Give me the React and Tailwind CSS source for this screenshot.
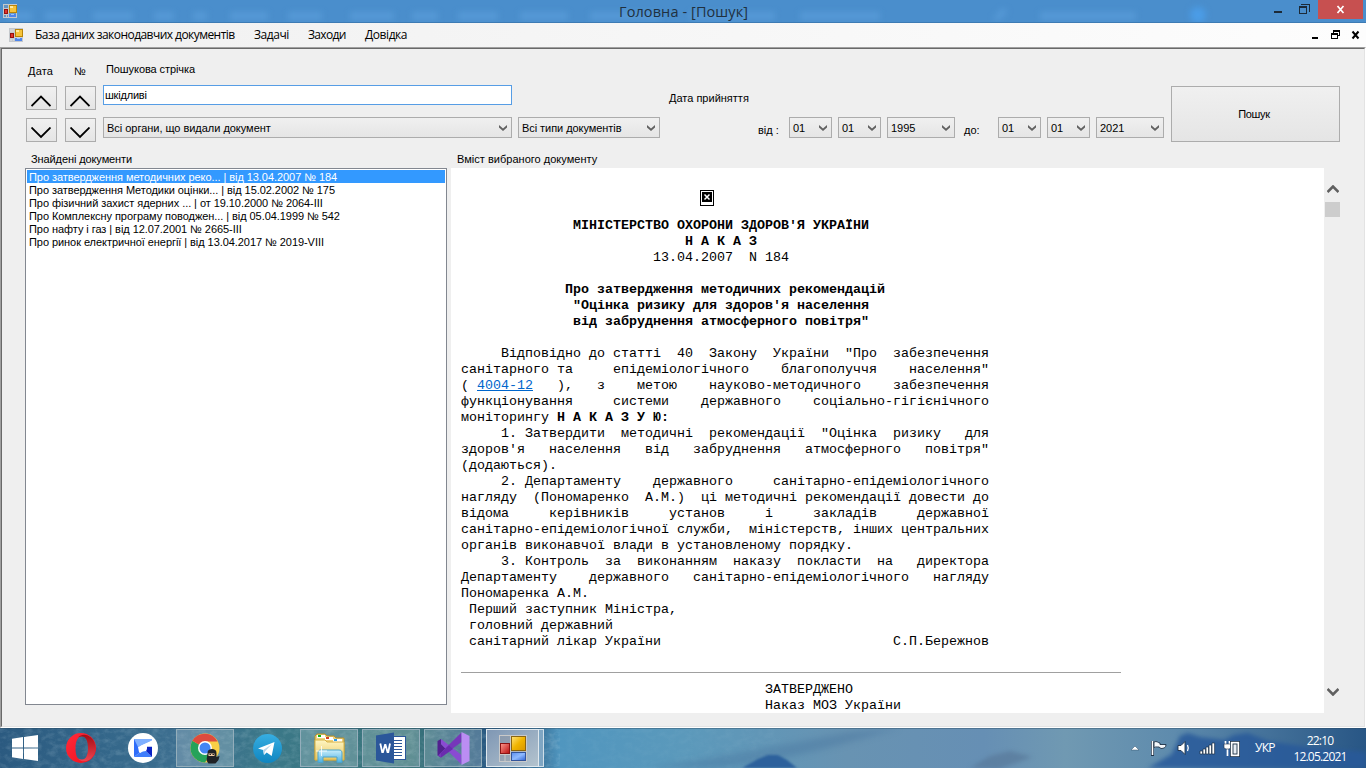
import React from "react";

const UI = "font-['Liberation_Sans',Arial,sans-serif] text-[11px] leading-[13px] whitespace-pre text-black";

function FormsIcon({ className }) {
  return (
    <svg className={className} viewBox="0 0 28 27" fill="none">
      <defs>
        <linearGradient id="fy" x1="0" y1="0" x2="1" y2="1">
          <stop offset="0" stopColor="#ffe27a" />
          <stop offset="0.5" stopColor="#f0b400" />
          <stop offset="1" stopColor="#d79500" />
        </linearGradient>
        <linearGradient id="fr" x1="0" y1="0" x2="1" y2="1">
          <stop offset="0" stopColor="#ff9a90" />
          <stop offset="1" stopColor="#b80d0d" />
        </linearGradient>
        <linearGradient id="fb" x1="0" y1="0" x2="1" y2="1">
          <stop offset="0" stopColor="#5c8ff0" />
          <stop offset="0.5" stopColor="#8fbaff" />
          <stop offset="1" stopColor="#2e62d8" />
        </linearGradient>
      </defs>
      <rect x="0.5" y="0.5" width="27" height="26" fill="#8d9099" fillOpacity="0.35" stroke="#c9c9c9" />
      <path d="M1 8.500h10M11.500 0v27M1 19.500h10M6 20v7M12 17h15" stroke="#c9c9c9" />
      <rect x="12.500" y="1.500" width="14" height="14" fill="url(#fy)" stroke="#8a6510" />
      <rect x="1.500" y="8.500" width="9" height="10" fill="url(#fr)" stroke="#8b1414" />
      <rect x="12.500" y="17.500" width="14" height="8" fill="url(#fb)" stroke="#33559c" />
    </svg>
  );
}

function SmallFormsIcon() {
  return (
    <svg className="h-[14px] w-[14px] shrink-0" viewBox="0 0 14 14" shapeRendering="crispEdges">
      <rect x="0.500" y="0.500" width="13" height="13" fill="#9aa0a8" fillOpacity="0.35" stroke="#c4c8cc" />
      <path d="M0 4.500h6M5.500 0v14M0 10.500h6M3.500 11v3" stroke="#c4c8cc" />
      <rect x="6" y="1" width="8" height="8" fill="#b98508" />
      <rect x="7" y="2" width="6" height="6" fill="#f6c33a" />
      <rect x="7" y="2" width="3" height="2" fill="#ffe9a0" />
      <rect x="1" y="5" width="4" height="5" fill="#96100e" />
      <rect x="2" y="6" width="2" height="3" fill="#e0352a" />
      <rect x="6" y="10" width="7" height="3" fill="#4f86ec" />
      <rect x="8" y="10" width="3" height="1" fill="#9cc2ff" />
    </svg>
  );
}

function TitleBar() {
  const ghosts = [
    [8, 24], [45, 28], [93, 40], [154, 20], [193, 14], [230, 38], [288, 34], [350, 44], [412, 26],
    [458, 40], [520, 48], [590, 70], [690, 85], [800, 80], [1040, 96],
  ];
  return (
    <header className="relative flex h-[23px] items-start overflow-hidden border-b border-[#3d7bb4] bg-[#4a8ecc]">
      <svg className="absolute inset-0 h-[22px] w-[1366px]" viewBox="0 0 1366 22">
        <g className="blur-[3px]" fill="#66a9e4" fillOpacity="0.45">
          {ghosts.map(([x, w]) => (
            <rect key={x} x={x} y="12" width={w} height="8" />
          ))}
          <path d="M992 20l10-12 6 3-8 9z" />
          <circle cx="1198" cy="15" r="8" fill="#4ba0ee" fillOpacity="0.8" />
        </g>
      </svg>
      <div className="relative mt-1 ml-[3px] h-[14px] w-[14px]"><SmallFormsIcon /></div>
      <div className="relative flex-1 pl-[602px] font-['Open_Sans','Noto_Sans',sans-serif] text-[14.5px] leading-[24px] tracking-[0.1px] whitespace-pre text-[#20303f]">
        Головна - [Пошук]
      </div>
      <svg className="relative mr-[3px] h-[19px] w-[100px]" viewBox="0 0 100 19" shapeRendering="crispEdges">
        <rect x="11" y="11" width="8" height="2" fill="#1c2a38" />
        <path d="M38 4.500h8v7" fill="none" stroke="#1c2a38" />
        <path d="M36.500 6.500h7v7h-7zM36 7.500h8" fill="none" stroke="#1c2a38" />
        <rect x="55" y="0" width="45" height="19" fill="#c75050" />
        <path d="M74.500 6l6 7M80.500 6l-6 7" stroke="#fff" strokeWidth="1.700" shapeRendering="auto" />
      </svg>
    </header>
  );
}

function MenuBar() {
  return (
    <nav className="flex h-6 items-center bg-linear-to-r from-[#f0f0f0] to-[#fdfdfd] pl-[9px] font-['Open_Sans','Noto_Sans',sans-serif] text-[12px] leading-4 whitespace-pre text-black">
      <SmallFormsIcon />
      <span className="ml-3 w-[219px] tracking-[-0.55px]">База даних законодавчих документів</span>
      <span className="w-[54px] tracking-[-0.43px]">Задачі</span>
      <span className="w-[57px] tracking-[-0.65px]">Заходи</span>
      <span className="tracking-[-0.43px]">Довідка</span>
      <svg className="mr-[5px] ml-auto h-[10px] w-[50px]" viewBox="0 0 50 10" shapeRendering="crispEdges">
        <rect x="1" y="7" width="6" height="2" fill="#000" />
        <path d="M22 0.500h7M22 1.500h7M28.500 0v6M22.500 0v3M27 5.500h2M20 3.500h7M20 4.500h7M20.500 3v6M26.500 3v6M20 8.500h7" stroke="#000" />
        <path d="M41.500 1.500l6 7M47.500 1.500l-6 7" stroke="#000" strokeWidth="2" shapeRendering="auto" />
      </svg>
    </nav>
  );
}

function ArrowButton({ down }) {
  return (
    <button className="flex h-[24px] w-[31px] items-center justify-center border border-[#acacac] bg-linear-to-b from-[#f0f0f0] to-[#e5e5e5]">
      <svg className="mt-[5px] mr-px h-[12px] w-[20px]" viewBox="0 0 20 12" fill="none" stroke="#000" strokeWidth="1.800">
        <path d={down ? "M0.500 0.500L10 10L19.500 0.500" : "M0.500 11L10 1.500L19.500 11"} />
      </svg>
    </button>
  );
}

function Select({ label, className = "" }) {
  return (
    <div className={`flex h-[21px] shrink-0 items-center justify-between border border-[#acacac] bg-linear-to-b from-[#f0f0f0] to-[#e5e5e5] pr-[4px] pl-[3px] ${UI} ${className}`}>
      <span className="pt-px">{label}</span>
      <svg className="h-[6px] w-[8px]" viewBox="0 0 8 6">
        <path d="M0 0v2.500L4 6l4-3.500V0L4 3.500z" fill="#606060" />
      </svg>
    </div>
  );
}

function SearchForm() {
  return (
    <section className="flex h-[103px] items-start pl-[24px]">
      <div className="w-[39px] pt-[16px]">
        <div className={`${UI} h-[21px] pl-[2px] tracking-[0.2px]`}>Дата</div>
        <div className="flex flex-col gap-2">
          <ArrowButton />
          <ArrowButton down />
        </div>
      </div>
      <div className="w-[38px] pt-[16px]">
        <div className={`${UI} h-[21px] pl-[9px]`}>№</div>
        <div className="flex flex-col gap-2">
          <ArrowButton />
          <ArrowButton down />
        </div>
      </div>
      <div className="w-[566px] pt-[14px]">
        <div className={`${UI} h-[22px] pl-[3px] tracking-[-0.08px]`}>Пошукова стрічка</div>
        <div className={`${UI} flex h-[20px] w-[409px] items-center border border-[#569de5] bg-white pl-px tracking-[-0.2px]`}>шкідливі</div>
        <div className="mt-3 flex gap-[6px]">
          <Select className="w-[409px] tracking-[-0.03px]" label="Всі органи, що видали документ" />
          <Select className="w-[142px] tracking-[-0.06px]" label="Всі типи документів" />
        </div>
      </div>
      <div className="w-[502px] pt-[43px]">
        <div className={`${UI} h-[25px]`}>Дата прийняття</div>
        <div className="flex">
          <span className={`${UI} w-[120px] pt-[7px] pl-[89px]`}>від :</span>
          <Select className="mr-[6px] w-[43px]" label="01" />
          <Select className="mr-[6px] w-[43px]" label="01" />
          <Select className="w-[68px]" label="1995" />
          <span className={`${UI} w-[43px] pt-[7px] pl-[9px]`}>до:</span>
          <Select className="mr-[6px] w-[43px]" label="01" />
          <Select className="mr-[6px] w-[43px]" label="01" />
          <Select className="w-[68px]" label="2021" />
        </div>
      </div>
      <button className={`${UI} mt-[37px] h-[56px] w-[169px] border border-[#acacac] bg-linear-to-b from-[#f0f0f0] to-[#e5e5e5] pr-[3px] tracking-[-0.3px]`}>Пошук</button>
    </section>
  );
}

const results = [
  "Про затвердження методичних реко... | від 13.04.2007 № 184",
  "Про затвердження Методики оцінки... | від 15.02.2002 № 175",
  "Про фізичний захист ядерних ... | от 19.10.2000 № 2064-III",
  "Про Комплексну програму поводжен... | від 05.04.1999 № 542",
  "Про нафту і газ | від 12.07.2001 № 2665-III",
  "Про ринок електричної енергії | від 13.04.2017 № 2019-VIII",
];

function ResultList() {
  return (
    <section className="w-[448px] pl-[23px]">
      <h2 className={`${UI} h-[16px] pt-px pl-[6px] tracking-[-0.1px]`}>Знайдені документи</h2>
      <ul className="h-[537px] w-[422px] border border-[#828790] bg-white p-px">
        {results.map((r, i) => (
          <li key={r} className={`${UI} h-[13px] pt-px pl-[2px] tracking-[-0.06px] ${i === 0 ? "bg-[#3399ff] text-white" : ""}`}>{r}</li>
        ))}
      </ul>
    </section>
  );
}

const lines = [
  <b>{"              МІНІСТЕРСТВО ОХОРОНИ ЗДОРОВ'Я УКРАЇНИ"}</b>,
  <b>{"                            Н А К А З"}</b>,
  "                        13.04.2007  N 184",
  "",
  <b>{"             Про затвердження методичних рекомендацій"}</b>,
  <b>{"              \"Оцінка ризику для здоров'я населення"}</b>,
  <b>{"              від забруднення атмосферного повітря\""}</b>,
  "",
  "     Відповідно до статті  40  Закону  України  \"Про  забезпечення",
  "санітарного та     епідеміологічного    благополуччя    населення\"",
  <>{"( "}<a className="text-[#0066cc] underline">4004-12</a>{"   ),   з    метою    науково-методичного    забезпечення"}</>,
  "функціонування     системи    державного    соціально-гігієнічного",
  <>{"моніторингу "}<b>Н А К А З У Ю:</b></>,
  "     1. Затвердити  методичні  рекомендації  \"Оцінка  ризику   для",
  "здоров'я   населення   від   забруднення   атмосферного   повітря\"",
  "(додаються).",
  "     2. Департаменту    державного     санітарно-епідеміологічного",
  "нагляду  (Пономаренко  А.М.)  ці методичні рекомендації довести до",
  "відома     керівників     установ     і     закладів     державної",
  "санітарно-епідеміологічної служби,  міністерств, інших центральних",
  "органів виконавчої влади в установленому порядку.",
  "     3. Контроль  за  виконанням  наказу  покласти  на   директора",
  "Департаменту    державного   санітарно-епідеміологічного   нагляду",
  "Пономаренка А.М.",
  " Перший заступник Міністра,",
  " головний державний",
  " санітарний лікар України                             С.П.Бережнов",
];

const approval = [
  "                                      ЗАТВЕРДЖЕНО",
  "                                      Наказ МОЗ України",
];

function MonoLines({ items, className }) {
  return (
    <div className={`font-['Liberation_Mono','Courier_New',monospace] text-[13.333px] leading-4 whitespace-pre text-black ${className}`}>
      {items.map((line, i) => (
        <p key={i} className="h-4">{line}</p>
      ))}
    </div>
  );
}

function DocumentView() {
  return (
    <section className="w-[891px]">
      <h2 className={`${UI} h-[16px] pt-px pl-[7px] tracking-[0.02px]`}>Вміст вибраного документу</h2>
      <div className="ml-px flex h-[545px]">
        <article className="w-[873px] overflow-hidden bg-white pt-[22px] pl-[10px]">
          <svg className="ml-[239px] h-[16px] w-[14px]" viewBox="0 0 14 16" shapeRendering="crispEdges">
            <rect x="0.500" y="0.500" width="13" height="15" fill="#fff" stroke="#000" />
            <rect x="2" y="2" width="10" height="10" fill="#000" />
            <path d="M4.500 4.500l5 5M9.500 4.500l-5 5" stroke="#fff" strokeWidth="1.500" shapeRendering="auto" />
          </svg>
          <MonoLines items={lines} className="mt-[12px]" />
          <hr className="mt-[22px] h-px w-[660px] border-0 bg-[#a0a0a0]" />
          <MonoLines items={approval} className="mt-[9px]" />
        </article>
        <div className="flex w-[17px] flex-col items-center pt-[17px] pb-[17px]">
          <svg className="h-[8px] w-[12px]" viewBox="0 0 12 8"><path d="M0.500 7L6 1.500L11.500 7" fill="none" stroke="#606060" strokeWidth="2.600" /></svg>
          <div className="mt-[9px] h-[15px] w-[15px] bg-[#cdcdcd]" />
          <svg className="mt-auto h-[8px] w-[12px]" viewBox="0 0 12 8"><path d="M0.500 1L6 6.500L11.500 1" fill="none" stroke="#606060" strokeWidth="2.600" /></svg>
        </div>
      </div>
    </section>
  );
}

function TaskButton({ children, active, framed = true, className = "" }) {
  const frame = active
    ? "border-[#dfe8ee] bg-linear-to-br from-[#7f97b4] to-[#b3c3ce]"
    : framed
      ? "border-[#94aebb] bg-white/20"
      : "border-transparent";
  return <div className={`flex h-[38px] items-center justify-center border ${frame} ${className}`}>{children}</div>;
}

function OperaIcon() {
  return (
    <svg className="h-[30px] w-[30px]" viewBox="0 0 30 30">
      <defs>
        <linearGradient id="op" x1="0" y1="0" x2="1" y2="1"><stop offset="0" stopColor="#ff2a3a" /><stop offset="1" stopColor="#f0101c" /></linearGradient>
        <linearGradient id="op2" x1="0" y1="0" x2="0" y2="1"><stop offset="0" stopColor="#a30c14" /><stop offset="1" stopColor="#ee4450" /></linearGradient>
      </defs>
      <path fillRule="evenodd" fill="url(#op)" d="M15 0a15 15 0 1 0 0 30a15 15 0 1 0 0-30zM16 3c5 0 6.500 5 6.500 12s-1.500 12-6.500 12s-6.500-5-6.500-12s2.500-12 6.500-12z" />
      <path fill="url(#op2)" d="M12 4.500c7-3.500 10 2 10 10.500s-3 14-10 10.500c4 4.500 9.500 3 13 0a14.500 14.500 0 0 0 0-21c-3.500-3-9-4.500-13 0z" />
    </svg>
  );
}

function BlueAppIcon() {
  return (
    <svg className="h-[30px] w-[30px]" viewBox="0 0 30 30">
      <circle cx="15" cy="15" r="15" fill="#fff" />
      <path d="M6 6v18l5-4 3-13z" fill="#2f6dfa" />
      <path d="M6 6h18v2L10 14z" fill="#7fb0ff" />
      <path d="M6 24h18l-6-6-6 1z" fill="#3f7dfb" />
      <path d="M19 13.500h5V24l-6-6z" fill="#0a22c4" />
      <path d="M24 7.500L10 14l1 5 1.500 1L18 15.500l1 2.500 0-4.500 5 0z" fill="#fff" />
    </svg>
  );
}

function ChromeIcon() {
  return (
    <svg className="ml-[1px] h-[31px] w-[31px]" viewBox="0 0 31 31">
      <circle cx="15" cy="15" r="14.500" fill="#f9cf46" />
      <path d="M15 15L2.400 7.800A14.500 14.500 0 0 0 15 29.500L21 19z" fill="#25a25a" />
      <path d="M15 15L2.400 7.800A14.500 14.500 0 0 1 27.600 8.500H15z" fill="#dd4b3e" />
      <circle cx="15" cy="15" r="7" fill="#fff" />
      <circle cx="15" cy="15" r="5.500" fill="#4285f4" />
      <path d="M17.500 20c0-3 2-4 4.500-4s4.500 1 4.500 4v4l3-1-1 4-3 3.500h-7l-2-3z" fill="#202225" />
      <path d="M18.500 20.500h6v2.500h-6z" fill="#f2c9a0" />
      <path d="M19.500 21.500h1.500M22.500 21.500h1.500" stroke="#222" />
    </svg>
  );
}

function TelegramIcon() {
  return (
    <svg className="h-[29px] w-[29px]" viewBox="0 0 29 29">
      <defs><linearGradient id="tg" x1="0" y1="0" x2="0" y2="1"><stop offset="0" stopColor="#37aee2" /><stop offset="1" stopColor="#0f85c0" /></linearGradient></defs>
      <circle cx="14.500" cy="14.500" r="14.500" fill="url(#tg)" />
      <path d="M5 14.500L21.500 8l-2.800 14-5-3.500-2.700 2.500-.8-5z" fill="#fff" />
      <path d="M10.200 16l8.300-5.500-6.300 6.700-1.200 3.800z" fill="#b9d6ea" />
    </svg>
  );
}

function FolderIcon() {
  return (
    <svg className="h-[30px] w-[33px]" viewBox="0 0 33 30">
      <defs>
        <linearGradient id="fo" x1="0" y1="0" x2="0" y2="1"><stop offset="0" stopColor="#fff6c4" /><stop offset="1" stopColor="#e8c660" /></linearGradient>
        <linearGradient id="st" x1="0" y1="0" x2="0" y2="1"><stop offset="0" stopColor="#c8eefc" /><stop offset="1" stopColor="#4cafe0" /></linearGradient>
      </defs>
      <path d="M2 27V3l2-2h8l2 2h7l2 2h8v22z" fill="#efd27c" stroke="#b58f2f" />
      <rect x="4" y="2" width="8" height="3" fill="#fff" /><rect x="5" y="2" width="3" height="2" fill="#13b413" />
      <rect x="12" y="4" width="8" height="3" fill="#fff" /><rect x="13" y="4" width="3" height="2" fill="#d64020" />
      <rect x="20" y="6" width="9" height="3" fill="#fff" /><rect x="21" y="6" width="3" height="2" fill="#2a9be8" />
      <path d="M2 7h10l2 2h17v18H2z" fill="url(#fo)" stroke="#d6b146" />
      <path d="M5 29.500V20c0-2 1-3 3-3h18c2 0 3 1 3 3v9.500h-5V24H10v5.500z" fill="url(#st)" stroke="#4ba3cc" />
      <path d="M8.500 13v10M3 18h11" stroke="#fff" strokeOpacity="0.8" />
    </svg>
  );
}

function WordIcon() {
  return (
    <svg className="h-[32px] w-[30px]" viewBox="0 0 30 32">
      <rect x="14.500" y="4.500" width="15" height="23" fill="#fff" stroke="#2b579a" />
      <path d="M17 8.500h9M17 11.500h9M17 14.500h9M17 17.500h9M17 20.500h9M17 23.500h9" stroke="#2b579a" strokeWidth="1.200" />
      <path d="M0 3.500L18 0.500v31L0 28.500z" fill="#2b579a" />
      <path d="M4.300 11.500l1.900 8.500h.8L9 13h.5l2 7h.8L14 11.500" fill="none" stroke="#fff" strokeWidth="1.800" />
    </svg>
  );
}

function StudioIcon() {
  return (
    <svg className="h-[33px] w-[33px]" viewBox="0 0 33 33">
      <path d="M0.500 9L4 7v5l4.500 4.500L4 21v4.500l-3.500-2z" fill="#52218f" />
      <path d="M4 7l20.500 16v9.500L12 20 4 12z" fill="#8a4bd2" />
      <path d="M4 25.500L1 23.500 24.500 0.500V10L15 17z" fill="#7636ba" />
      <path d="M4 25.500v-4.500l8-7.500 4 3.500z" fill="#6a2cae" />
      <path d="M24.500 0l8 4v25l-8 4z" fill="#bb8df3" />
    </svg>
  );
}

function Tray() {
  return (
    <svg className="h-[18px] w-[112px]" viewBox="0 0 112 18">
      <path d="M1 11l4-4 4 4z" fill="#fff" stroke="#31506b" strokeWidth="0.500" />
      <path d="M22.500 2v15" stroke="#1e3146" strokeWidth="3" />
      <path d="M22.500 2v14" stroke="#fff" strokeWidth="1.600" />
      <path d="M24 3c3-1.500 4 1 6 1v1.500h6c0 3-2 4-5 4l-2-1.500c-2 0-3-.5-5 .5z" fill="#f4f7fa" stroke="#1e3146" strokeWidth="0.900" />
      <path d="M48 6.500h3l4-4v13l-4-4h-3z" fill="#fff" stroke="#1e3146" strokeWidth="0.900" />
      <path d="M57.500 6c1 2 1 4 0 6" fill="none" stroke="#fff" strokeWidth="1.300" />
      <g fill="#fff" stroke="#1e3146" strokeWidth="0.700">
        <path d="M70 12h2.600v3H70zM73 10h2.600v5H73zM76 8h2.600v7H76zM79 6h2.600v9H79zM82 4h2.600v11H82z" />
      </g>
      <path d="M95.500 2v4M99.500 2v4M97.500 8v9" stroke="#fff" strokeWidth="1.700" />
      <path d="M94 5h7v4l-2 1h-3l-2-1z" fill="#fff" stroke="#1e3146" strokeWidth="0.600" />
      <rect x="101.500" y="3.500" width="7" height="13" fill="#5e86ab" stroke="#1e3146" strokeWidth="3" />
      <rect x="101.500" y="3.500" width="7" height="13" fill="#fff" stroke="#fff" strokeWidth="1.400" />
      <rect x="103" y="5" width="4" height="10" fill="#e8eef4" stroke="#1e3146" strokeWidth="0.900" />
    </svg>
  );
}

function Wallpaper() {
  return (
    <svg className="absolute inset-0 h-10 w-[1366px]" viewBox="0 0 1366 40" preserveAspectRatio="none">
      <defs>
        <linearGradient id="sea" x1="0" x2="1" y1="0" y2="0">
          <stop offset="0" stopColor="#2b5a80" />
          <stop offset="0.08" stopColor="#34678a" />
          <stop offset="0.13" stopColor="#3d6f90" />
          <stop offset="0.2" stopColor="#3b7888" />
          <stop offset="0.3" stopColor="#397479" />
          <stop offset="0.355" stopColor="#285880" />
          <stop offset="0.397" stopColor="#3d789f" />
          <stop offset="0.41" stopColor="#5096bf" />
          <stop offset="0.5" stopColor="#5b99bb" />
          <stop offset="0.62" stopColor="#6893b2" />
          <stop offset="0.72" stopColor="#668fb4" />
          <stop offset="0.78" stopColor="#7099b2" />
          <stop offset="0.86" stopColor="#5e8bad" />
          <stop offset="1" stopColor="#285685" />
        </linearGradient>
        <filter id="grain" x="0" y="0" width="1" height="1">
          <feTurbulence type="fractalNoise" baseFrequency="0.12 0.18" numOctaves="4" seed="4" />
          <feColorMatrix values="0 0 0 0 0.7  0 0 0 0 0.85  0 0 0 0 0.9  0.7 0 0 0 -0.28" />
        </filter>
      </defs>
      <rect width="1366" height="40" fill="url(#sea)" />
      <rect width="560" height="40" filter="url(#grain)" opacity="0.5" />
      <rect x="540" width="240" height="40" filter="url(#grain)" opacity="0.15" />
      <path className="blur-[3px]" d="M650 40c60-10 130-22 200-36l50-4c-50 14-100 30-180 40z" fill="#45729e" fillOpacity="0.4" />
      <path className="blur-[1px]" d="M742 40l16-9 10-4 10 0 9 5 10 8z" fill="#2d619c" />
      <path className="blur-[2px]" d="M970 40l20-12 20-5 22 6-16 6-18 6z" fill="#58799a" fillOpacity="0.7" />
      <path className="blur-[2px]" d="M1148 40l24-14 8-18 8-3 12 4 24 3 10-5 14-2 20 8 40 6 58 5v16z" fill="#28599a" fillOpacity="0.85" />
      <rect width="1366" height="1" fill="#2d4a61" fillOpacity="0.4" />
    </svg>
  );
}

function Taskbar() {
  const face = "font-['Open_Sans','Noto_Sans',sans-serif] text-[12px] leading-[16px] text-white";
  return (
    <footer className="relative h-10 overflow-hidden">
      <Wallpaper />
      <div className="relative flex h-10 items-center">
        <TaskButton framed={false} className="w-[50px]">
          <svg className="h-[26px] w-[26px]" viewBox="0 0 26 26" fill="#fff"><path d="M0 3.700L11 2v10.500H0zM12 1.900L26 0v12.500H12zM0 13.500h11V24L0 22.300zM12 13.500h14V26l-14-2z" /></svg>
        </TaskButton>
        <TaskButton framed={false} className="ml-[2px] w-[58px]"><OperaIcon /></TaskButton>
        <TaskButton framed={false} className="ml-1 w-[58px]"><BlueAppIcon /></TaskButton>
        <TaskButton className="ml-1 w-[58px]"><ChromeIcon /></TaskButton>
        <TaskButton framed={false} className="ml-1 w-[58px]"><TelegramIcon /></TaskButton>
        <TaskButton className="ml-1 w-[58px]"><FolderIcon /></TaskButton>
        <TaskButton className="ml-1 w-[58px]"><WordIcon /></TaskButton>
        <TaskButton className="ml-1 w-[58px]"><StudioIcon /></TaskButton>
        <TaskButton active className="ml-1 w-[53px]"><FormsIcon className="h-[27px] w-[28px]" /></TaskButton>
        <div className="h-[38px] w-[5px] border border-l-0 border-[#cfdee8] bg-[#7fa6c3]" />
        <div className="ml-auto"><Tray /></div>
        <span className={`${face} ml-[13px] w-[33px] tracking-[-0.7px]`}>УКР</span>
        <div className={`${face} mr-[14px] w-[64px] pt-[2px] text-center tracking-[-0.8px]`}>
          <div>22:10</div>
          <div>12.05.2021</div>
        </div>
      </div>
    </footer>
  );
}

export default function App() {
  return (
    <div className="flex h-[768px] w-[1366px] flex-col overflow-hidden bg-[#f0f0f0]">
      <TitleBar />
      <MenuBar />
      <main className="flex h-[681px] flex-col border-t border-r border-b border-l border-t-[#a0a0a0] border-r-white border-b-white border-l-[#a0a0a0]">
        <div className="flex flex-1 flex-col border border-t-[#696969] border-r-[#e3e3e3] border-b-[#e3e3e3] border-l-[#696969] bg-[#efefef]">
          <SearchForm />
          <div className="flex">
            <ResultList />
            <DocumentView />
          </div>
        </div>
      </main>
      <Taskbar />
    </div>
  );
}
